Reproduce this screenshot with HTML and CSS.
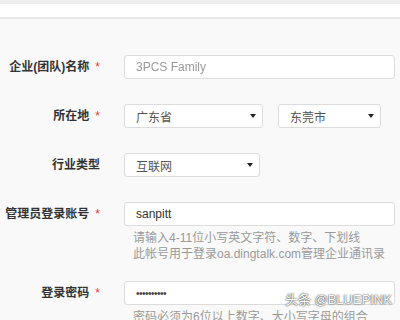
FILE: index.html
```html
<!DOCTYPE html>
<html lang="zh">
<head>
  <meta charset="UTF-8" />
  <meta name="viewport" content="width=device-width, initial-scale=1.0"/>
  <title>注册企业</title>
  <link rel="stylesheet" href="styles.css">
</head>
<body>
  <div class="topbar"></div>

  <div class="reg-form">
    <div class="form-row">
      <div class="form-label">企业(团队)名称<span class="req">*</span></div>
      <div class="form-control">
        <div class="field wide"><span class="blurred">3PCS Family</span></div>
      </div>
    </div>

    <div class="form-row">
      <div class="form-label">所在地<span class="req">*</span></div>
      <div class="form-control inline">
        <div class="field select province"><span>广东省</span><i class="caret"></i></div>
        <div class="field select city"><span>东莞市</span><i class="caret"></i></div>
      </div>
    </div>

    <div class="form-row">
      <div class="form-label">行业类型</div>
      <div class="form-control">
        <div class="field select industry"><span>互联网</span><i class="caret"></i></div>
      </div>
    </div>

    <div class="form-row with-hint">
      <div class="form-label">管理员登录账号<span class="req">*</span></div>
      <div class="form-control">
        <div class="field wide">sanpitt</div>
        <p class="hint">请输入4-11位小写英文字符、数字、下划线<br>此帐号用于登录oa.dingtalk.com管理企业通讯录</p>
      </div>
    </div>

    <div class="form-row">
      <div class="form-label">登录密码<span class="req">*</span></div>
      <div class="form-control">
        <div class="field wide"><span class="dots">••••••••••</span></div>
        <p class="hint">密码必须为6位以上数字、大小写字母的组合</p>
      </div>
    </div>
  </div>

  <div class="watermark">头条 @BLUEPINK</div>
</body>
</html>
```

FILE: styles.css
```css
body {
  margin: 0;
  background-color: #f9f9f9;
  font-family: "Liberation Sans", "Noto Sans CJK SC", sans-serif;
  font-size: 12px;
  color: #333;
  overflow: hidden;
}

.topbar {
  height: 13px;
  background-color: #fff;
  border-top: 4px solid #efefef;
  border-bottom: 2px solid #e9e9e9;
}

.reg-form {
  padding-top: 36px;
}

.form-row {
  display: flex;
  align-items: flex-start;
  margin-bottom: 25px;
}

.form-row.with-hint {
  margin-bottom: 19px;
}

.form-label {
  width: 100px;
  margin-right: 24px;
  text-align: right;
  font-weight: bold;
  line-height: 24px;
  color: #333;
  white-space: nowrap;
}

.req {
  color: #e4393c;
  font-weight: normal;
  margin-left: 6px;
}

.form-control.inline {
  display: flex;
  gap: 15px;
}

.field {
  box-sizing: border-box;
  height: 24px;
  padding: 0 11px;
  display: flex;
  align-items: center;
  justify-content: space-between;
  background-color: #fff;
  border: 1px solid #dcdcdc;
  border-radius: 3px;
  color: #333;
}

.field.wide { width: 271px; }
.field.province { width: 139px; }
.field.city { width: 103px; }
.field.industry { width: 136px; }

.field.select {
  padding-right: 6px;
  color: #555;
}

.caret {
  width: 0;
  height: 0;
  border-left: 3px solid transparent;
  border-right: 3px solid transparent;
  border-top: 4px solid #222;
}

.blurred {
  color: #999;
  filter: blur(0.6px);
}

.dots {
  font-size: 10px;
  letter-spacing: -0.5px;
  color: #444;
}

.hint {
  margin: 4px 0 0 9px;
  line-height: 16px;
  color: #999;
}

.watermark {
  position: absolute;
  right: 8px;
  bottom: 12px;
  font-size: 13px;
  color: #fff;
  text-shadow: 0 0 2px #444, 0 0 1px #444;
}
```
